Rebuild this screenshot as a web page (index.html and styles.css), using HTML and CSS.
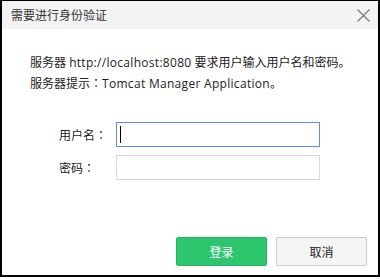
FILE: index.html
```html
<!DOCTYPE html>
<html lang="zh-CN">
<head>
  <meta charset="UTF-8" />
  <title>需要进行身份验证</title>
  <link rel="stylesheet" href="styles.css">
</head>
<body>
  <div class="dialog">
    <!-- Title bar -->
    <div class="titlebar">
      <span>需要进行身份验证</span>
      <svg class="close" width="13" height="13" viewBox="0 0 13 13">
        <path d="M0.5 0.5 L12.5 12.5 M12.5 0.5 L0.5 12.5" stroke="#777" stroke-width="1.1" fill="none"/>
      </svg>
    </div>

    <!-- Content -->
    <div class="content">
      <div class="message">
        <div>服务器 <span class="en">http://localhost:8080</span> 要求用户输入用户名和密码。</div>
        <div>服务器提示<span class="colon" lang="zh-TW">：</span><span class="en">Tomcat Manager Application</span>。</div>
      </div>

      <div class="form">
        <div class="row">
          <label class="label">用户名<span class="colon" lang="zh-TW">：</span></label>
          <div class="field">
            <input class="input focused" type="text" />
            <span class="caret"></span>
          </div>
        </div>
        <div class="row">
          <label class="label">密码<span class="colon" lang="zh-TW">：</span></label>
          <div class="field">
            <input class="input" type="password" />
          </div>
        </div>
      </div>
    </div>

    <div class="actions">
      <button class="btn btn-primary">登录</button>
      <button class="btn">取消</button>
    </div>
  </div>
</body>
</html>
```

FILE: styles.css
```css
body {
  margin: 0;
  font-family: "Segoe UI", "Open Sans", "Noto Sans CJK SC", sans-serif;
  font-size: 12px;
  background: white;
}

.dialog {
  box-sizing: border-box;
  width: 380px;
  height: 277px;
  border: 2px solid #000;
  border-top-width: 1px;
  display: flex;
  flex-direction: column;
}

.titlebar {
  height: 28px;
  background: #f3f3f3;
  display: flex;
  align-items: center;
  justify-content: space-between;
  padding: 0 8px 0 9px;
  color: #333;
}

.close {
  display: block;
}

.content {
  padding: 24px 0 0 28px;
  flex: 1;
}

.message {
  line-height: 20px;
  color: #222;
}

.en {
  letter-spacing: 0.3px;
}

.colon {
  font-family: "Noto Sans CJK TC", sans-serif;
}

.form {
  margin-top: 28px;
  padding-left: 29px;
  display: flex;
  flex-direction: column;
  gap: 8px;
}

.row {
  display: flex;
  align-items: center;
}

.label {
  width: 57px;
  color: #222;
}

.field {
  position: relative;
}

.input {
  box-sizing: border-box;
  width: 204px;
  height: 25px;
  border: 1px solid #d9d9d9;
  margin: 0;
  padding: 0 4px;
  outline: none;
  display: block;
}

.input.focused {
  border-color: #5b8def;
}

.caret {
  position: absolute;
  left: 4px;
  top: 4px;
  width: 1px;
  height: 17px;
  background: #000;
}

.actions {
  display: flex;
  justify-content: flex-end;
  gap: 9px;
  padding: 0 11px 9px 0;
}

.btn {
  box-sizing: border-box;
  width: 91px;
  height: 29px;
  border: 1px solid #cccccc;
  border-radius: 2px;
  background: #f5f5f5;
  font-family: inherit;
  font-size: 12px;
  color: #222;
  padding: 0;
}

.btn-primary {
  background: #2ec56f;
  border-color: #22b662;
  color: #fff;
}
```
